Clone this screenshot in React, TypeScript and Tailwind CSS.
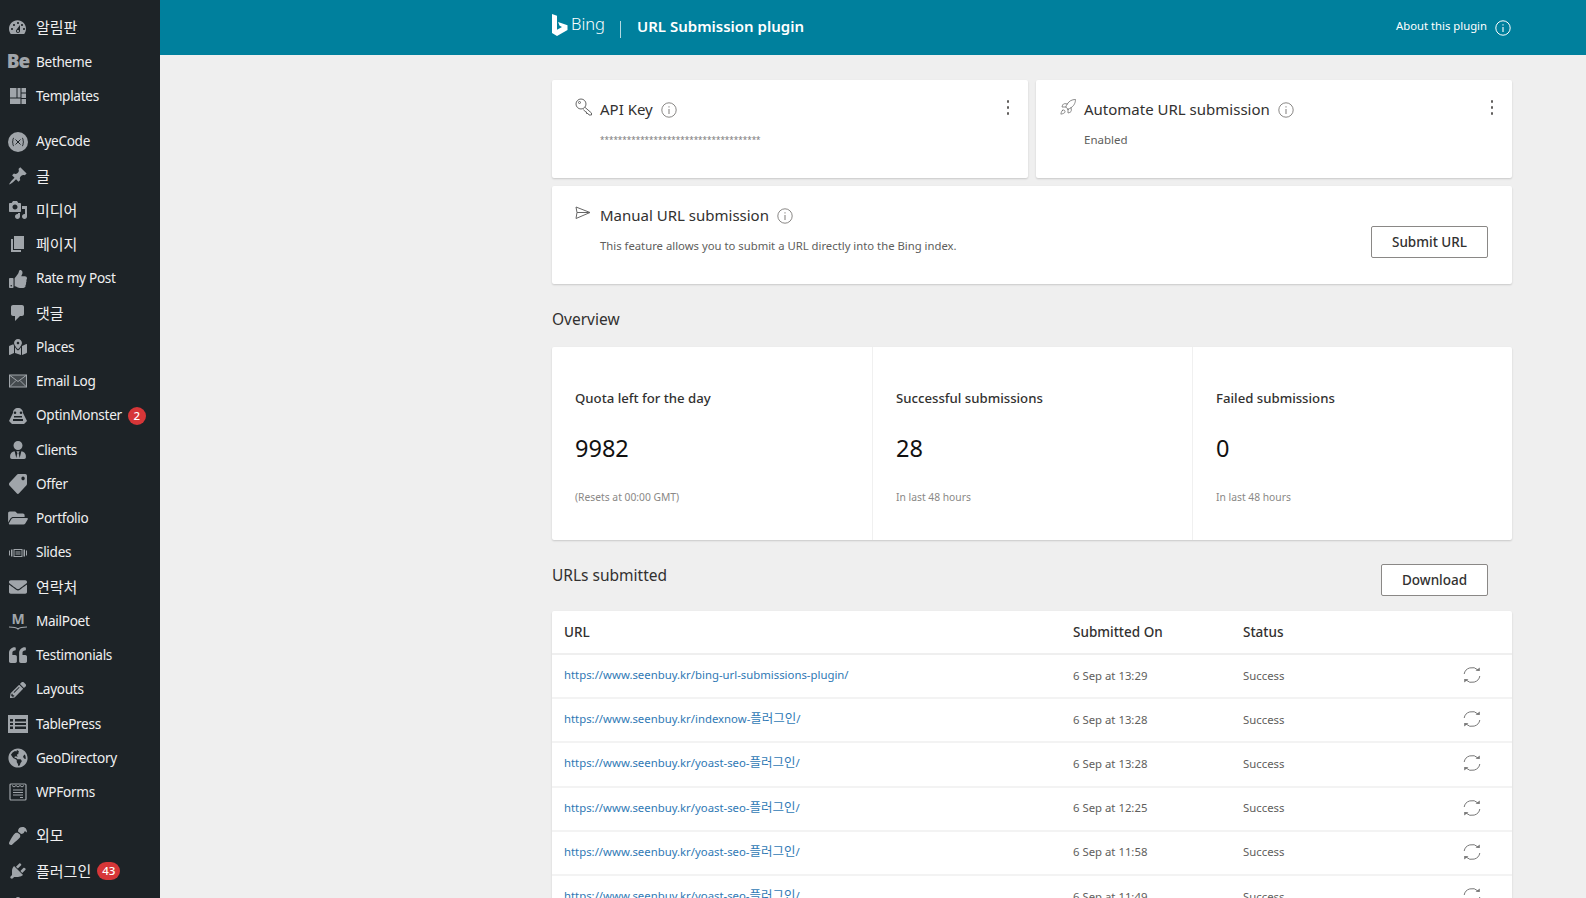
import React from "react";
import { Rocket } from "lucide-react";
import {
  FaEnvelope,
  FaFolderOpen,
  FaGlobeAmericas,
  FaMapMarkedAlt,
  FaPaintBrush,
  FaPencilAlt,
  FaQuoteLeft,
  FaTag,
  FaThumbsUp,
  FaUserTie,
} from "react-icons/fa";

const iconClass = "h-[18px] w-[18px] text-[#a0a5aa]";
const dashClass = "h-5 w-5 text-[#a0a5aa]";

// wp admin menu icons
function Dash({ d }: { d: string }) {
  return (
    <svg viewBox="0 0 20 20" className={dashClass} fill="currentColor">
      <path d={d} />
    </svg>
  );
}

const paths = {
  dashboard:
    "M3.760 16h12.480c1.100-1.430 1.760-3.210 1.760-5.140 0-4.700-3.800-8.500-8.500-8.500S1 6.160 1 10.860c0 1.930.66 3.710 1.760 5.140zm6.240-12c.55 0 1 .45 1 1s-.45 1-1 1-1-.45-1-1 .45-1 1-1zM6 6c.55 0 1 .45 1 1s-.45 1-1 1-1-.45-1-1 .45-1 1-1zm8 0c.55 0 1 .45 1 1s-.45 1-1 1-1-.45-1-1 .45-1 1-1zm-5.370 5.550L12 7v6c0 1.100-.9 2-2 2s-2-.9-2-2c0-.57.240-1.080.63-1.450zM4 10c.55 0 1 .45 1 1s-.45 1-1 1-1-.45-1-1 .45-1 1-1zm12 0c.55 0 1 .45 1 1s-.45 1-1 1-1-.45-1-1 .45-1 1-1zm-5 3c0-.55-.45-1-1-1s-1 .45-1 1 .45 1 1 1 1-.45 1-1z",
  post: "M10.440 3.020l1.820-1.820 6.360 6.350-1.830 1.820c-1.050-.68-2.480-.57-3.410.36l-.75.75c-.92.93-1.040 2.350-.35 3.410l-1.830 1.820-2.410-2.410-2.800 2.790c-.42.42-3.380 2.710-3.800 2.290s1.860-3.390 2.280-3.810l2.790-2.790L4.100 9.360l1.830-1.820c1.050.69 2.480.57 3.400-.36l.75-.75c.93-.92 1.050-2.350.36-3.410z",
  media:
    "M13 11V4c0-.55-.45-1-1-1h-1.670L9 1H5L3.670 3H2c-.55 0-1 .45-1 1v7c0 .55.45 1 1 1h10c.55 0 1-.45 1-1zM7 4.500c1.380 0 2.500 1.120 2.500 2.500S8.380 9.500 7 9.500 4.500 8.380 4.500 7 5.620 4.500 7 4.500zM14 6h5v10.500c0 1.380-1.120 2.500-2.500 2.500S14 17.880 14 16.500s1.120-2.500 2.500-2.500c.17 0 .34.020.5.050V9h-3V6zm-4 8.050V13h2v3.500c0 1.380-1.120 2.500-2.500 2.500S7 17.880 7 16.500 8.120 14 9.500 14c.17 0 .34.020.5.050z",
  page: "M6 15V2h10v13H6zm-1 1h8v2H3V5h2v11z",
  comment:
    "M5 2h9c1.100 0 2 .9 2 2v7c0 1.100-.9 2-2 2h-2l-5 5v-5H5c-1.100 0-2-.9-2-2V4c0-1.100.9-2 2-2z",
  plugin:
    "M13.110 4.360L9.870 7.600 8 5.730l3.240-3.240c.35-.34 1.050-.2 1.560.32.52.51.66 1.210.31 1.550zm-8 1.770l.91-1.120 9.010 9.010-1.190.84c-.71.71-2.630 1.160-3.820 1.160H6.140L4.900 17.260c-.59.59-1.540.59-2.120 0-.59-.58-.59-1.530 0-2.120l1.240-1.240v-3.880c0-1.130.4-3.050 1.110-3.760zm7.260 3.970l3.240-3.240c.34-.35 1.040-.21 1.550.31.52.51.66 1.210.31 1.560l-3.240 3.240z",
  users:
    "M10 9.250c-2.270 0-2.730-3.440-2.730-3.440C7 4.020 7.820 2 9.970 2c2.160 0 2.980 2.020 2.710 3.810 0 0-.41 3.440-2.680 3.440zm0 2.570L12.720 10c2.390 0 4.520 2.330 4.520 4.530v2.490s-3.650 1.130-7.240 1.130c-3.650 0-7.240-1.130-7.240-1.130v-2.490c0-2.250 1.940-4.480 4.150-4.480z",
};

function BeIcon() {
  return (
    <span className="text-[19px] font-black leading-none tracking-[-1px] text-[#a0a5aa]">Be</span>
  );
}

function TemplatesIcon() {
  return (
    <svg viewBox="0 0 18 18" className={iconClass} fill="currentColor">
      <path d="M1 1h6.500v9.500H1zM8.500 1h3v9.500h-3zM1 11.500h10.500V17H1zM12.500 1H17v4.500h-4.500zM12.500 6.500H17V11h-4.500zM12.500 12H17v5h-4.500z" />
    </svg>
  );
}

function AyeIcon() {
  return (
    <svg viewBox="0 0 20 20" className="h-5 w-5 text-[#a0a5aa]" fill="none">
      <circle cx="10" cy="10" r="10" fill="currentColor" />
      <path d="M6 6c-1.400 0-1 3-1.200 3.500-.2.400-.8.500-.8.500s.6.100.8.500C5 11 4.600 14 6 14M14 6c1.400 0 1 3 1.200 3.500.2.400.8.500.8.500s-.6.100-.8.500C15 11 15.400 14 14 14M7.500 7.500l5 5M12.500 7.500l-5 5" stroke="#1d2327" strokeWidth="1" />
    </svg>
  );
}

function MailLogIcon() {
  return (
    <svg viewBox="0 0 18 18" className={iconClass} fill="none">
      <rect x="0.500" y="3" width="17" height="12" fill="currentColor" fillOpacity="0.3" stroke="currentColor" />
      <path d="M1 3.500l8 6 8-6M1 14.500l6-6M17 14.500l-6-6" stroke="currentColor" />
    </svg>
  );
}

function MonsterIcon() {
  return (
    <svg viewBox="0 0 20 20" className="h-5 w-5 text-[#a0a5aa]" fill="currentColor">
      <path fillRule="evenodd" d="M10 2c3 0 5 2 5 5l4 8-3 3H4l-3-3 4-8c0-3 2-5 5-5zM7 5.500a1.300 1.300 0 100 2.600 1.300 1.300 0 000-2.600zM13 5.500a1.300 1.300 0 100 2.600 1.300 1.300 0 000-2.600zM6 10v1.500h8V10zM5 13v2h10v-2z" />
    </svg>
  );
}

function SlidesIcon() {
  return (
    <svg viewBox="0 0 18 18" className={iconClass} fill="currentColor">
      <path fillRule="evenodd" d="M4.500 5h9v8h-9zM5.500 6v6h7V6zM6.500 7.500h5v1h-5zM6.500 9.500h5v1h-5z" />
      <path d="M0 6.500h1v5H0zM2 5.500h1.500v7H2zM14.500 5.500H16v7h-1.500zM17 6.500h1v5h-1z" />
    </svg>
  );
}

function MailPoetIcon() {
  return (
    <span className="flex h-[20px] w-[18px] flex-col items-center text-[#a0a5aa]">
      <span className="text-[14px] font-bold leading-[15px]">M</span>
      <svg viewBox="0 0 18 4" className="h-1 w-[18px]" fill="none">
        <path d="M0 1c4 0 7 0 9 2 2-2 5-2 9-2" stroke="currentColor" strokeWidth="1.200" />
      </svg>
    </span>
  );
}

function TableIcon() {
  return (
    <svg viewBox="0 0 20 20" className="h-5 w-5 text-[#a0a5aa]" fill="currentColor">
      <path fillRule="evenodd" d="M0 1h20v18H0zM2 5v2.500h3V5zM7 5v2.500h11V5zM2 9v2h3V9zM7 9v2h11V9zM2 12.500V15h3v-2.500zM7 12.500V15h11v-2.500z" />
    </svg>
  );
}

function FormsIcon() {
  return (
    <svg viewBox="0 0 18 18" className={iconClass} fill="none" stroke="currentColor">
      <rect x="1" y="1" width="16" height="16" rx="1" strokeWidth="1.200" />
      <path d="M3 2.500l2 1.500 2-1.500 2 1.500 2-1.500 2 1.500 2-1.500M4 7h10M4 9.500h10M4 12h10M11 14.500h3" strokeWidth="1" />
    </svg>
  );
}

const iconBox = (Icon: React.ComponentType<{ className?: string }>, extra = "") => (
  <Icon className={`h-[18px] w-[18px] text-[#a0a5aa] ${extra}`} />
);

type MenuItem = { label: string; icon: React.ReactNode; badge?: string; gap?: string; kr?: boolean };

const menu: MenuItem[] = [
  { label: "알림판", icon: <Dash d={paths.dashboard} />, kr: true },
  { label: "Betheme", icon: <BeIcon /> },
  { label: "Templates", icon: <TemplatesIcon /> },
  { label: "AyeCode", icon: <AyeIcon />, gap: "mt-[11.200px]" },
  { label: "글", icon: <Dash d={paths.post} />, kr: true },
  { label: "미디어", icon: <Dash d={paths.media} />, kr: true },
  { label: "페이지", icon: <Dash d={paths.page} />, kr: true },
  { label: "Rate my Post", icon: iconBox(FaThumbsUp) },
  { label: "댓글", icon: <Dash d={paths.comment} />, kr: true },
  { label: "Places", icon: iconBox(FaMapMarkedAlt) },
  { label: "Email Log", icon: <MailLogIcon /> },
  { label: "OptinMonster", icon: <MonsterIcon />, badge: "2" },
  { label: "Clients", icon: iconBox(FaUserTie) },
  { label: "Offer", icon: iconBox(FaTag, "-scale-x-100 scale-y-110") },
  { label: "Portfolio", icon: iconBox(FaFolderOpen, "scale-110") },
  { label: "Slides", icon: <SlidesIcon /> },
  { label: "연락처", icon: iconBox(FaEnvelope), kr: true },
  { label: "MailPoet", icon: <MailPoetIcon /> },
  { label: "Testimonials", icon: iconBox(FaQuoteLeft) },
  { label: "Layouts", icon: iconBox(FaPencilAlt, "scale-90") },
  { label: "TablePress", icon: <TableIcon /> },
  { label: "GeoDirectory", icon: iconBox(FaGlobeAmericas, "scale-110") },
  { label: "WPForms", icon: <FormsIcon /> },
  { label: "외모", icon: iconBox(FaPaintBrush, "rotate-180"), gap: "mt-[9px]", kr: true },
  { label: "플러그인", icon: <Dash d={paths.plugin} />, badge: "43", gap: "mt-[1px]", kr: true },
  { label: "", icon: <Dash d={paths.users} /> },
];

function Sidebar() {
  return (
    <aside className="h-[898px] w-[160px] shrink-0 overflow-hidden bg-[#1d2327] pt-[10.500px]">
      {menu.map((item, i) => (
        <div key={i} className={`flex h-[34.250px] items-center ${item.gap ?? ""}`}>
          <span className="flex w-[36px] justify-center">{item.icon}</span>
          <span
            className={
              item.kr
                ? "whitespace-nowrap text-[15px] text-[#f0f0f1]"
                : "whitespace-nowrap text-[13.600px] tracking-[-0.3px] text-[#f0f0f1]"
            }
          >
            {item.label}
          </span>
          {item.badge && (
            <span className="ml-[6px] flex h-[18px] min-w-[18px] items-center justify-center rounded-full bg-[#d63638] px-[5px] text-[11.500px] font-medium text-white">
              {item.badge}
            </span>
          )}
        </div>
      ))}
    </aside>
  );
}

function InfoIcon({ className = "h-4 w-4 text-[#8a8886]" }: { className?: string }) {
  return (
    <svg viewBox="0 0 16 16" className={className} fill="none" stroke="currentColor">
      <circle cx="8" cy="8" r="7.200" strokeWidth="1" />
      <path d="M8 7v5M8 4.200v1.200" strokeWidth="1.100" />
    </svg>
  );
}

function Dots() {
  return (
    <div className="flex flex-col gap-[3.500px] pt-[20px]">
      <span className="h-[2.500px] w-[2.500px] rounded-full bg-[#605e5c]" />
      <span className="h-[2.500px] w-[2.500px] rounded-full bg-[#605e5c]" />
      <span className="h-[2.500px] w-[2.500px] rounded-full bg-[#605e5c]" />
    </div>
  );
}

function KeyIcon() {
  return (
    <svg viewBox="0 0 18 18" className="h-[18px] w-[18px] text-[#666]" fill="none" stroke="currentColor" strokeWidth="1">
      <circle cx="6" cy="6" r="5" />
      <circle cx="4.500" cy="4.500" r="1" />
      <path d="M9.800 9.200l6.700 5.800v2h-2.500l-1-1.500h-1.500v-1.500l-1.500-.5-1.500-2" />
    </svg>
  );
}

function PlaneIcon() {
  return (
    <svg viewBox="0 0 16 14" className="mt-[2px] h-[14px] w-[16px] text-[#666]" fill="none" stroke="currentColor" strokeWidth="1">
      <path d="M1 1l14 5.500L1 12.500l1-6zM2 6.500h13" />
    </svg>
  );
}

function RefreshIcon() {
  return (
    <svg viewBox="0 0 18 18" className="h-[18px] w-[18px] text-[#777]" fill="none" stroke="currentColor" strokeWidth="1">
      <path d="M1.200 8A8 7.500 0 0115 4M16.800 10A8 7.500 0 013 14" />
      <path d="M12.500 4.800l4.300.2V1.500z M5.500 13.200L1.200 13v3.500z" fill="currentColor" stroke="none" />
    </svg>
  );
}

function OutlineButton({ text, className }: { text: string; className: string }) {
  return (
    <button className={`h-[32px] rounded-[2px] border border-[#8a8886] bg-white text-[13.500px] font-medium text-[#323130] ${className}`}>
      {text}
    </button>
  );
}

const cardClass = "rounded-[2px] bg-white shadow-[0_1px_2px_rgba(0,0,0,0.16)]";

function Heading({ icon, title, sub, subClass }: { icon: React.ReactNode; title: string; sub: string; subClass: string }) {
  return (
    <div>
      <div className="flex items-start">
        <span className="flex w-[48px] pl-[23px] pt-[18px]">{icon}</span>
        <h2 className="mt-[17px] whitespace-nowrap text-[15px] leading-[24px] text-[#323130]">{title}</h2>
        <span className="ml-[8px] mt-[22px]">
          <InfoIcon />
        </span>
      </div>
      <p className={`ml-[48px] mt-[10px] whitespace-nowrap leading-[18px] text-[#605e5c] ${subClass}`}>{sub}</p>
    </div>
  );
}

const stats = [
  { title: "Quota left for the day", value: "9982", note: "(Resets at 00:00 GMT)" },
  { title: "Successful submissions", value: "28", note: "In last 48 hours" },
  { title: "Failed submissions", value: "0", note: "In last 48 hours" },
];

const rows = [
  { url: "https://www.seenbuy.kr/bing-url-submissions-plugin/", kr: false, date: "6 Sep at 13:29" },
  { url: "https://www.seenbuy.kr/indexnow-", kr: true, date: "6 Sep at 13:28" },
  { url: "https://www.seenbuy.kr/yoast-seo-", kr: true, date: "6 Sep at 13:28" },
  { url: "https://www.seenbuy.kr/yoast-seo-", kr: true, date: "6 Sep at 12:25" },
  { url: "https://www.seenbuy.kr/yoast-seo-", kr: true, date: "6 Sep at 11:58" },
  { url: "https://www.seenbuy.kr/yoast-seo-", kr: true, date: "6 Sep at 11:49" },
];

export default function App() {
  return (
    <div className="flex h-[898px] overflow-hidden bg-[#efefef] [font-family:'Noto_Sans','Noto_Sans_CJK_KR',sans-serif]">
      <Sidebar />
      <main className="min-w-0 flex-1">
        <header className="flex h-[55px] items-center bg-[#00809d] pl-[392px] pr-[75px] text-white">
          <svg viewBox="0 0 16 22" className="-mt-[6px] h-[22px] w-[16px]" fill="white">
            <path d="M0 0l5 1.800v14l5-2.800-2.400-1.200L6.100 8 15.500 11.300v4.700L5 22 0 19z" />
          </svg>
          <span className="-mt-[6px] ml-[3px] text-[16.500px] font-light leading-none">Bing</span>
          <span className="ml-[15px] mt-[3px] h-[17px] w-px bg-white/70" />
          <h1 className="-mt-[2px] ml-[16px] text-[15px] font-semibold">URL Submission plugin</h1>
          <span className="-mt-[2px] ml-auto text-[11.300px]">About this plugin</span>
          <InfoIcon className="ml-[8px] h-4 w-4 text-white" />
        </header>

        <div className="ml-[392px] w-[960px]">
          <div className="mt-[25px] grid grid-cols-2 gap-[8px]">
            <section className={`${cardClass} flex h-[98px] justify-between pr-[19px]`}>
              <Heading
                icon={<KeyIcon />}
                title="API Key"
                sub="************************************"
                subClass="text-[8.100px] text-[#777]"
              />
              <Dots />
            </section>
            <section className={`${cardClass} flex h-[98px] justify-between pr-[19px]`}>
              <Heading
                icon={<Rocket className="h-[18px] w-[18px] text-[#666]" strokeWidth={1} />}
                title="Automate URL submission"
                sub="Enabled"
                subClass="text-[11.500px]"
              />
              <Dots />
            </section>
          </div>

          <section className={`${cardClass} mt-[8px] flex h-[98px] items-start justify-between pr-[24px]`}>
            <Heading
              icon={<PlaneIcon />}
              title="Manual URL submission"
              sub="This feature allows you to submit a URL directly into the Bing index."
              subClass="text-[11.300px]"
            />
            <OutlineButton text="Submit URL" className="mt-[40px] w-[117px]" />
          </section>

          <h3 className="mt-[24px] text-[15.500px] leading-[22px] text-[#323130]">Overview</h3>

          <section className={`${cardClass} mt-[17px] grid h-[193px] grid-cols-3`}>
            {stats.map((s, i) => (
              <div key={s.title} className={`pl-[23px] pt-[41px] ${i > 0 ? "border-l border-[#f0f0f0]" : ""}`}>
                <p className="text-[13.200px] font-medium leading-[20px] text-[#323130]">{s.title}</p>
                <p className="mt-[26px] text-[23.500px] leading-[28px] text-[#111]">{s.value}</p>
                <p className="mt-[27px] text-[10.300px] leading-[16px] text-[#8a8886]">{s.note}</p>
              </div>
            ))}
          </section>

          <div className="mt-[24px] flex h-[32px] items-center justify-between pr-[24px]">
            <h3 className="-mt-[8px] text-[15.500px] text-[#323130]">URLs submitted</h3>
            <OutlineButton text="Download" className="w-[107px]" />
          </div>

          <section className={`${cardClass} mt-[15px] text-[#323130]`}>
            <div className="flex h-[44px] items-center border-b-2 border-[#efefef] pl-[12px] text-[13.500px] font-medium">
              <span className="w-[509px]">URL</span>
              <span className="w-[170px]">Submitted On</span>
              <span>Status</span>
            </div>
            {rows.map((r, i) => (
              <div key={i} className="flex h-[44.200px] items-center border-b-2 border-[#f3f3f3] pb-[2px] pl-[12px] text-[11.350px]">
                <a className="w-[509px] leading-[18px] text-[#3079b5]">
                  {r.url}
                  {r.kr && (
                    <>
                      <span className="text-[12.500px] leading-none">플러그인</span>/
                    </>
                  )}
                </a>
                <span className="w-[170px] text-[#605e5c]">{r.date}</span>
                <span className="w-[220px] text-[#605e5c]">Success</span>
                <RefreshIcon />
              </div>
            ))}
          </section>
        </div>
      </main>
    </div>
  );
}
